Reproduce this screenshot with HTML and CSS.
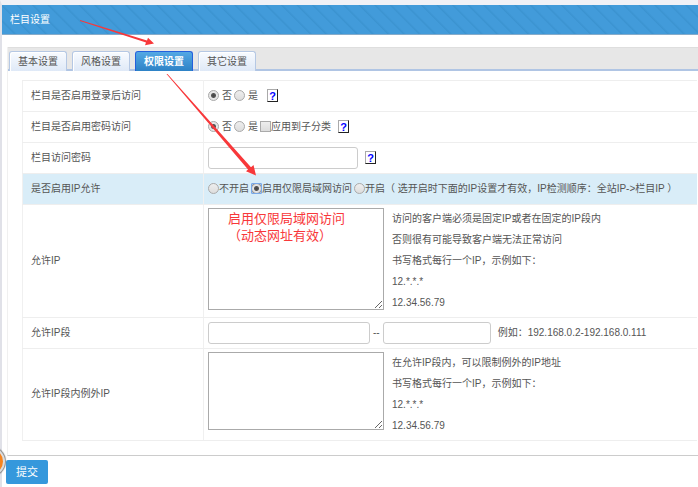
FILE: index.html
```html
<!DOCTYPE html>
<html lang="zh-CN">
<head>
  <meta charset="UTF-8" />
  <meta name="viewport" content="width=device-width, initial-scale=1.0"/>
  <title>栏目设置</title>
  <link rel="stylesheet" href="styles.css">
</head>
<body>
  <div class="page">
    <header class="title-bar">
      <h1>栏目设置</h1>
    </header>

    <form class="settings">
      <div class="panel">
        <nav class="tabs">
          <a class="tab" href="#basic">基本设置</a>
          <a class="tab" href="#style">风格设置</a>
          <a class="tab active" href="#rights">权限设置</a>
          <a class="tab" href="#other">其它设置</a>
        </nav>

        <table class="options">
          <tr>
            <th>栏目是否启用登录后访问</th>
            <td>
              <div class="line">
                <input type="radio" name="login" id="login0" checked><label class="spaced" for="login0">否</label>
                <input type="radio" name="login" id="login1"><label class="spaced" for="login1">是</label>
                <a class="help" href="#help">?</a>
              </div>
            </td>
          </tr>
          <tr>
            <th>栏目是否启用密码访问</th>
            <td>
              <div class="line">
                <input type="radio" name="pass" id="pass0" checked><label class="spaced" for="pass0">否</label>
                <input type="radio" name="pass" id="pass1"><label class="spaced" for="pass1">是</label>
                <input type="checkbox" id="sub"><label for="sub">应用到子分类</label>
                <a class="help" href="#help">?</a>
              </div>
            </td>
          </tr>
          <tr>
            <th><label for="password">栏目访问密码</label></th>
            <td>
              <div class="line">
                <input type="text" class="password" id="password">
                <a class="help" href="#help">?</a>
              </div>
            </td>
          </tr>
          <tr class="current">
            <th>是否启用IP允许</th>
            <td>
              <div class="line choices">
                <span class="choice"><input type="radio" name="ip" id="ip0"><label for="ip0">不开启</label></span>
                <span class="choice"><input type="radio" name="ip" id="ip1" class="focused" checked><label for="ip1">启用仅限局域网访问</label></span>
                <span class="choice"><input type="radio" name="ip" id="ip2"><label for="ip2">开启（ 选开启时下面的IP设置才有效，IP检测顺序：全站IP-&gt;栏目IP ）</label></span>
              </div>
            </td>
          </tr>
          <tr>
            <th><label for="allow">允许IP</label></th>
            <td>
              <div class="area">
                <textarea class="tall" id="allow"></textarea>
                <p class="tips">访问的客户端必须是固定IP或者在固定的IP段内<br>否则很有可能导致客户端无法正常访问<br>书写格式每行一个IP，示例如下：<br>12.*.*.*<br>12.34.56.79</p>
                <p class="remark">启用仅限局域网访问<br>（动态网址有效）</p>
              </div>
            </td>
          </tr>
          <tr>
            <th><label for="from">允许IP段</label></th>
            <td>
              <div class="line">
                <input type="text" class="from" id="from">
                <label class="dash" for="to">--</label>
                <input type="text" class="to" id="to">
                <span class="sample">例如：192.168.0.2-192.168.0.111</span>
              </div>
            </td>
          </tr>
          <tr>
            <th><label for="except">允许IP段内例外IP</label></th>
            <td>
              <div class="area">
                <textarea class="short" id="except"></textarea>
                <p class="tips">在允许IP段内，可以限制例外的IP地址<br>书写格式每行一个IP，示例如下：<br>12.*.*.*<br>12.34.56.79</p>
              </div>
            </td>
          </tr>
        </table>
      </div>

      <div class="buttons">
        <button type="submit">提交</button>
        <span class="ball"></span>
      </div>
    </form>

    <svg class="arrows" width="270" height="190" viewBox="0 0 270 190">
      <g fill="#f8383a">
        <path d="M80 20 L80 21 L146 42.6 L145 45.2 L154 43.5 L148 37.8 L147 40.4 Z"/>
        <path d="M166.500 74 L248 169.500 L246 171.300 L256 175.500 L253.500 165 L251 167.200 L167.500 74 Z"/>
      </g>
    </svg>
  </div>
</body>
</html>
```

FILE: styles.css
```css
* {
  box-sizing: border-box;
}

body {
  margin: 0;
  overflow-x: hidden;
  background: #fff;
  color: #555;
  font: 10px/20px "Liberation Sans", "Noto Sans CJK SC", sans-serif;
}

.page {
  position: relative;
  min-height: 100vh;
  border-top: 5px solid #f0f1f6;
  border-left: 2px solid #e0e1e8;
}

.title-bar {
  height: 30px;
  padding: 0 8px;
  background: repeating-linear-gradient(45deg, #429bda 0, #429bda 8px, #3b93d0 9px, #429bda 11px);
  border-bottom: 1px solid #86abc9;
}

.title-bar h1 {
  margin: 0;
  color: #fff;
  font-size: 10px;
  font-weight: normal;
  line-height: 30px;
}

.panel {
  margin: 12px 0 0 5px;
  padding-bottom: 14px;
  border-left: 1px solid #f0f0f0;
  border-bottom: 1px solid #ccc;
}

/* tabs */
.tabs {
  display: flex;
  align-items: flex-end;
  gap: 5px;
  height: 24px;
  padding-left: 1px;
  background: #e7e7e7;
  border-top: 1px solid #dedede;
  border-bottom: 2px solid #b0c5e4;
}

.tab {
  height: 20px;
  padding: 0 8px;
  margin-bottom: -2px;
  border: 1px solid #b5c8e4;
  border-bottom: 0;
  border-radius: 3px 3px 0 0;
  background: linear-gradient(#f8fbff, #dfe9f7);
  box-shadow: inset 1px 1px #fff;
  color: #555;
  line-height: 20px;
  text-decoration: none;
}

.tab.active {
  border-color: #2460dc;
  background: linear-gradient(#54a8e4, #2d82c6);
  box-shadow: none;
  color: #fff;
  font-weight: bold;
}

/* options */
.options {
  width: calc(100% - 15px);
  margin: 9px 1px 0 14px;
  border-collapse: collapse;
  border-left: 1px solid #f0f0f0;
}

.options th,
.options td {
  height: 31px;
  padding: 3px 4px 4px;
  border-top: 1px solid #eee;
  border-bottom: 1px solid #eee;
}

.options th {
  width: 181px;
  padding-left: 8px;
  border-right: 1px solid #f0f0f0;
  font-weight: normal;
  text-align: left;
}

.current {
  background: #d9edf8;
}

.line {
  display: flex;
  align-items: center;
  white-space: nowrap;
}

.choices {
  gap: 2px;
}

.choice {
  display: flex;
  align-items: center;
}

.spaced {
  padding: 0 2px 0 3px;
}

input[type="radio"],
input[type="checkbox"] {
  flex: none;
  appearance: none;
  width: 11px;
  height: 11px;
  margin: 0;
  border: 1px solid #aaa;
  background: linear-gradient(#eee, #ddd);
}

input[type="radio"] {
  border-radius: 50%;
}

input[type="radio"]:checked {
  background: radial-gradient(circle, #444 0, #555 2px, #e6e6e6 3px);
}

input[type="radio"].focused {
  border-color: #78a8e8;
  border-radius: 1px;
  background: radial-gradient(circle, #444 0, #555 2px, #e6e6e6 3px, #ddd 4px, #999 5px, #b5d2f5 6px);
}

input[type="text"] {
  height: 22px;
  padding: 2px 4px;
  border: 1px solid #ccc;
  border-radius: 3px;
  background: #fff;
  font: inherit;
}

.password {
  width: 150px;
}

.from {
  width: 162px;
}

.to {
  width: 108px;
}

.dash {
  padding: 0 3px;
}

.sample {
  margin-left: 7px;
}

.help {
  width: 11px;
  height: 13px;
  margin-left: 7px;
  border: 1px solid #aaa;
  border-right-color: #222;
  border-bottom-color: #222;
  background: #fff;
  color: #00f;
  font-size: 11px;
  font-weight: bold;
  line-height: 12px;
  text-align: center;
  text-decoration: none;
}

.area {
  position: relative;
  display: flex;
  gap: 8px;
}

textarea {
  display: block;
  flex: none;
  width: 176px;
  border: 1px solid #aaa;
  border-radius: 0;
  background: #fff;
  font: inherit;
}

.tall {
  height: 102px;
}

.short {
  height: 78px;
}

.tips {
  margin: 0;
  line-height: 21px;
  white-space: nowrap;
}

/* red remark lies over the text box */
.remark {
  position: absolute;
  top: 2px;
  left: 20px;
  margin: 0;
  color: #f8383a;
  font-size: 13px;
  line-height: 17px;
  pointer-events: none;
}

.buttons {
  position: relative;
  padding: 4px;
}

button {
  height: 24px;
  padding: 0 10px;
  border: 0;
  border-radius: 2px;
  background: #3598dc;
  color: #fff;
  font: 11px/24px "Liberation Sans", "Noto Sans CJK SC", sans-serif;
}

.ball {
  position: absolute;
  top: -9px;
  left: -26px;
  width: 29px;
  height: 29px;
  border: 2px solid #ddd;
  border-radius: 50%;
  background: #f5841f;
  box-shadow: 0 0 1px 1px #888;
}

.arrows {
  position: absolute;
  top: -5px;
  left: -2px;
  pointer-events: none;
}
```
